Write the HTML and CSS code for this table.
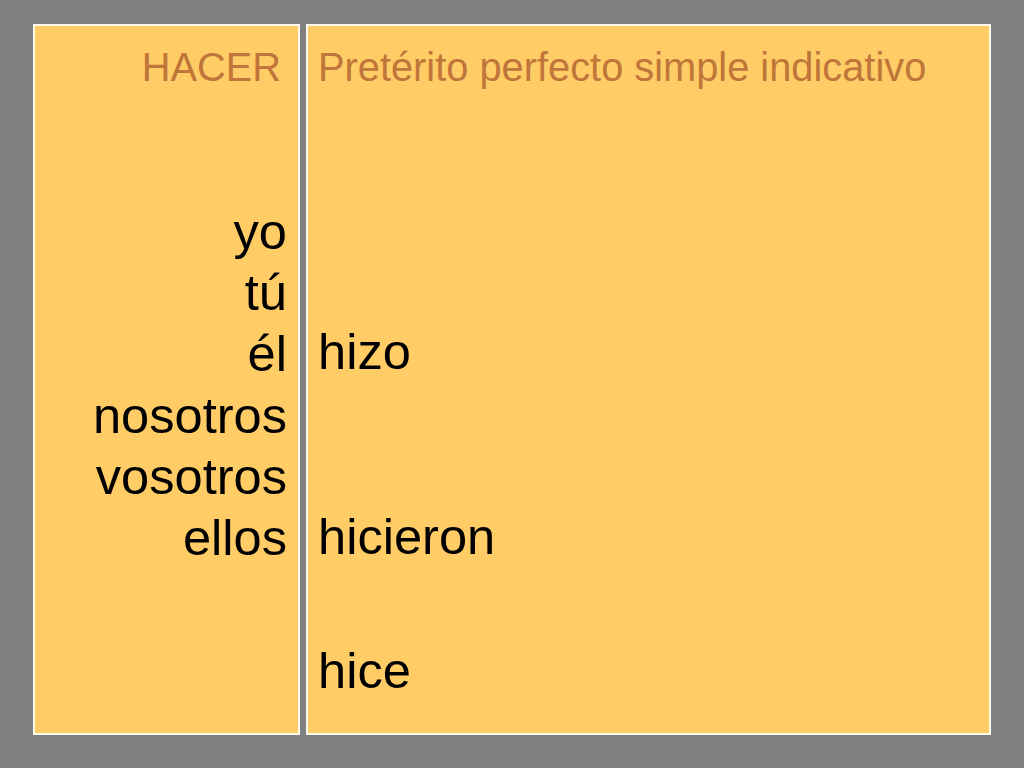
FILE: index.html
```html
<!DOCTYPE html>
<html lang="es">
<head>
<meta charset="utf-8">
<title>HACER – Pretérito perfecto simple indicativo</title>
<link rel="stylesheet" href="styles.css">
</head>
<body>
<main class="slide">
  <section class="panel panel-left">
    <h1 class="title title-left">HACER</h1>
    <ul class="pronouns">
      <li>yo</li>
      <li>tú</li>
      <li>él</li>
      <li>nosotros</li>
      <li>vosotros</li>
      <li>ellos</li>
    </ul>
  </section>
  <section class="panel panel-right">
    <h2 class="title title-right">Pretérito perfecto simple indicativo</h2>
    <p class="form form-hizo">hizo</p>
    <p class="form form-hicieron">hicieron</p>
    <p class="form form-hice">hice</p>
  </section>
</main>
</body>
</html>
```
FILE: styles.css
```css
html, body {
  margin: 0;
  padding: 0;
  background: #808080;
  width: 1024px;
  height: 768px;
  overflow: hidden;
}

.slide {
  display: flex;
  gap: 6px;
  padding: 24px 0 0 33px;
  font-family: "Liberation Sans", Arial, sans-serif;
}

.panel {
  box-sizing: border-box;
  height: 711px;
  background: #ffcc66;
  border: 2px solid #fffaf0;
  padding-top: 18px;
}

.panel-left {
  width: 267px;
  text-align: right;
}

.panel-right {
  width: 685px;
  padding-left: 10px;
}

.title {
  margin: 0;
  font-weight: normal;
  font-size: 39.8px;
  line-height: 46px;
  color: #c0763a;
}

.title-left {
  padding-right: 17px;
}

.pronouns {
  list-style: none;
  margin: 111px 0 0;
  padding: 0 11px 0 0;
  font-size: 50.6px;
  line-height: 61.2px;
  color: #000;
}

.form {
  margin: 0;
  font-size: 50.6px;
  line-height: 61.2px;
  color: #000;
}

.form-hizo { margin-top: 231px; }
.form-hicieron { margin-top: 124px; }
.form-hice { margin-top: 73px; }
```
